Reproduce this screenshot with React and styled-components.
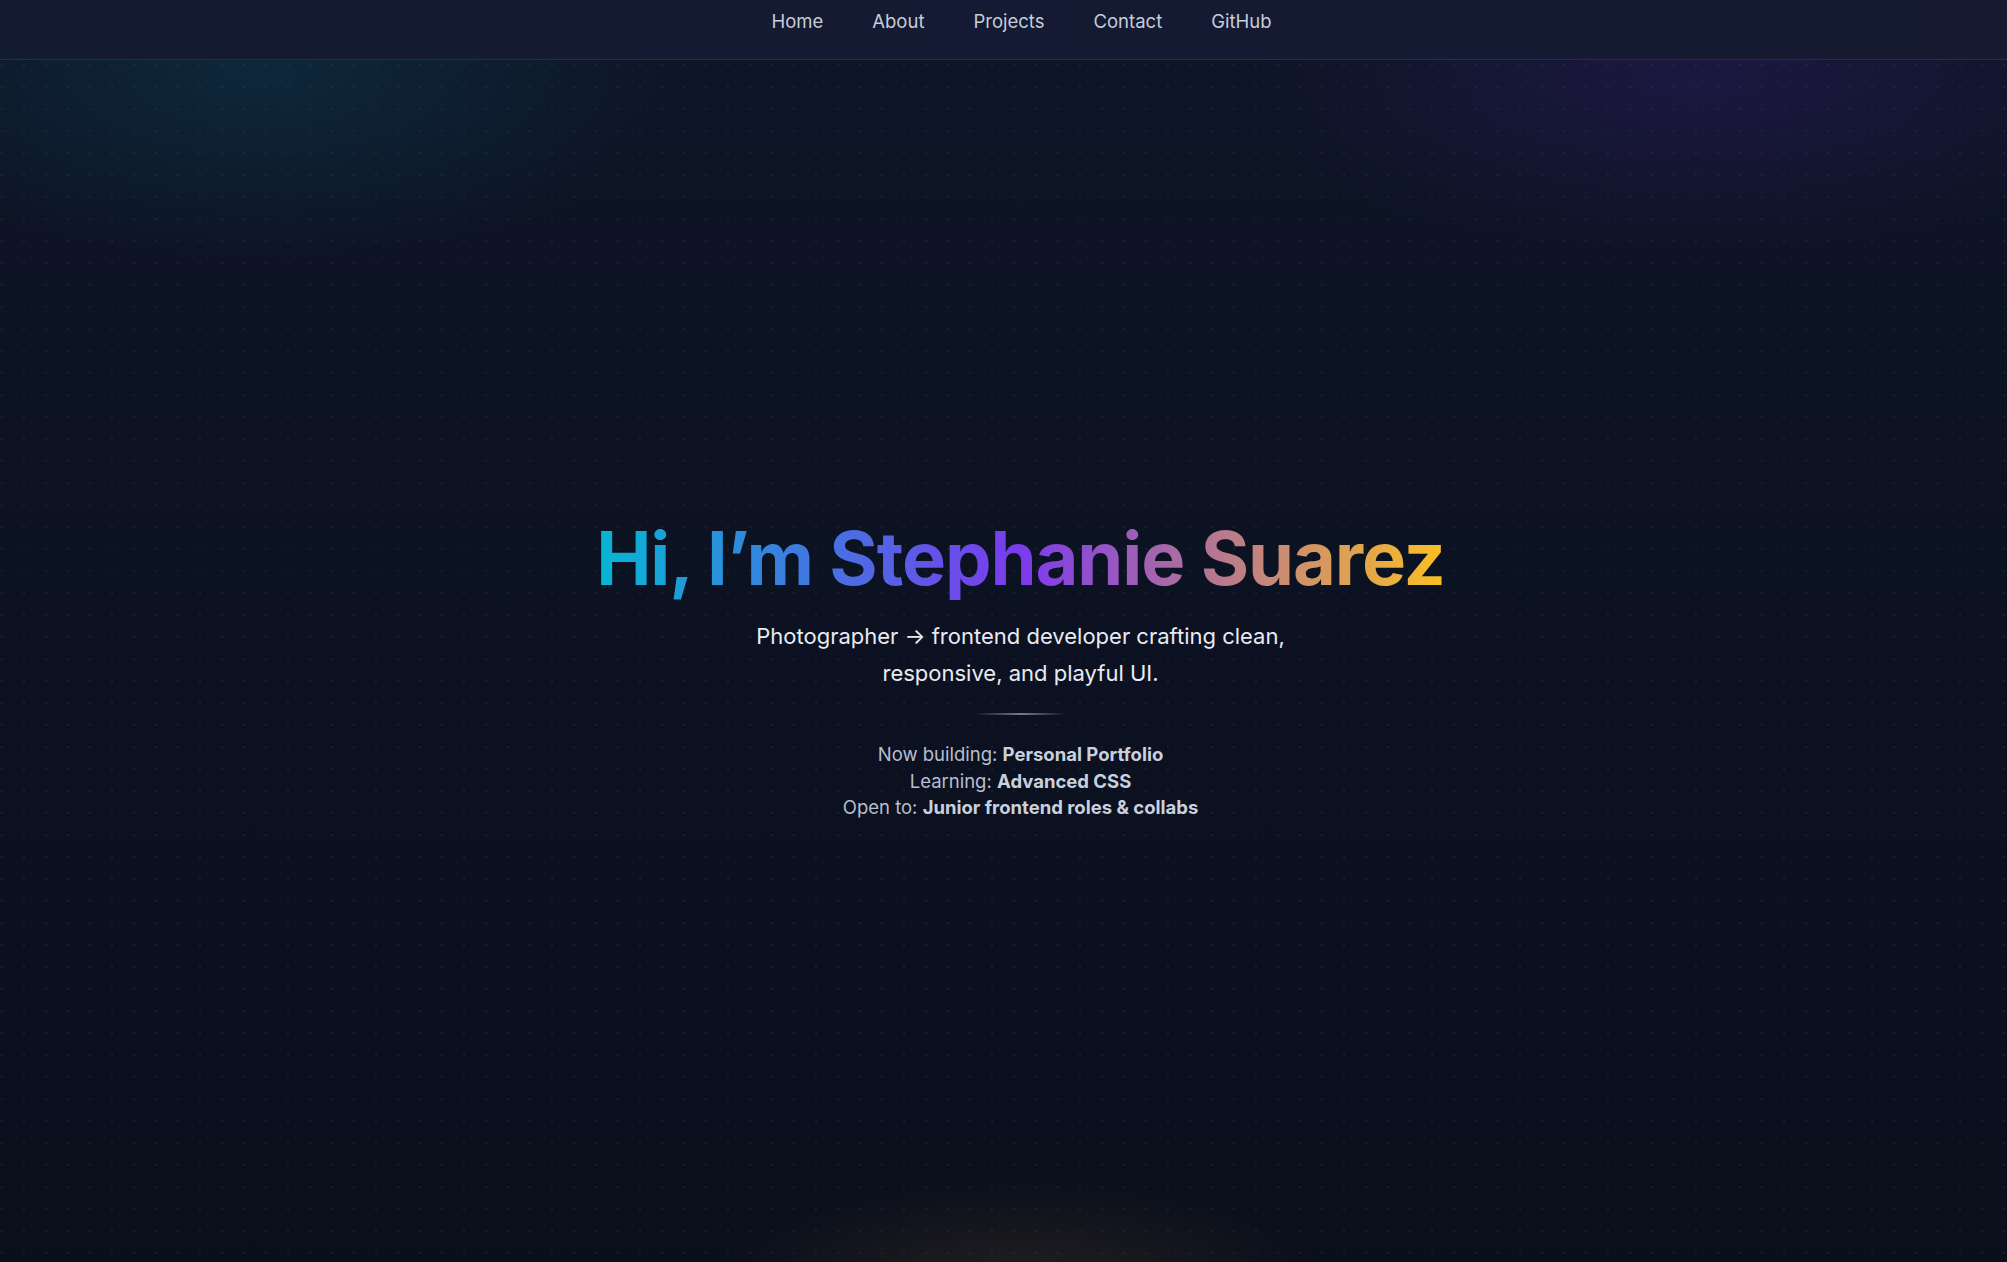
import React from 'react';
import styled, { createGlobalStyle } from 'styled-components';

const GlobalStyle = createGlobalStyle`
  html, body {
    margin: 0;
    padding: 0;
    background: #0b1120;
  }
  body {
    font-family: Inter, "Noto Sans", sans-serif;
    -webkit-font-smoothing: antialiased;
  }
  * { box-sizing: border-box; }
`;

const Page = styled.div`
  position: relative;
  min-height: 100vh;
  display: flex;
  flex-direction: column;
  overflow: hidden;
  background:
    radial-gradient(ellipse 600px 270px at 260px 70px, rgba(14, 116, 144, 0.2), transparent 72%),
    radial-gradient(ellipse 640px 250px at 1700px 80px, rgba(109, 40, 217, 0.15), transparent 72%),
    radial-gradient(ellipse 420px 150px at 1020px 1290px, rgba(190, 130, 50, 0.14), transparent 75%),
    linear-gradient(180deg, #0e1526 0%, #0b1120 60%, #0a0f1c 100%);

  &::before {
    content: '';
    position: absolute;
    inset: 0;
    pointer-events: none;
    background-image: radial-gradient(rgba(148, 163, 184, 0.085) 1px, transparent 1.5px);
    background-size: 22px 22px;
    background-position: 13px 10px;
  }
`;

const NavBar = styled.nav`
  position: relative;
  z-index: 1;
  height: 60px;
  display: flex;
  justify-content: center;
  align-items: flex-start;
  gap: 49px;
  padding-top: 10px;
  padding-left: 36px;
  background: linear-gradient(90deg, #131b30 0%, #141a33 50%, #151a30 100%);
  border-bottom: 1px solid rgba(148, 163, 184, 0.16);
`;

const NavLink = styled.a`
  color: #c7ccd8;
  font-size: 18.5px;
  line-height: 22px;
  text-decoration: none;
  cursor: pointer;
`;

const Hero = styled.main`
  position: relative;
  z-index: 1;
  flex: 1;
  display: flex;
  flex-direction: column;
  align-items: center;
  justify-content: center;
  text-align: center;
  padding-top: 16px;
  padding-left: 34px;
`;

const Title = styled.h1`
  margin: 0;
  font-size: 74px;
  font-weight: 700;
  letter-spacing: -1.1px;
  line-height: 1.12;
  background: linear-gradient(90deg, #06b6d4 0%, #7c3aed 50%, #fbbf24 100%);
  -webkit-background-clip: text;
  background-clip: text;
  color: transparent;
`;

const Tagline = styled.p`
  margin: 18px 0 0;
  max-width: 560px;
  color: #e8ebf2;
  font-size: 22px;
  line-height: 37px;
`;

const Divider = styled.div`
  width: 92px;
  height: 2px;
  margin: 21px 0 26px;
  background: linear-gradient(90deg, transparent, rgba(203, 213, 225, 0.55), transparent);
`;

const StatusList = styled.ul`
  list-style: none;
  margin: 0;
  padding: 0;
  color: #b7bfce;
  font-size: 18.5px;
  line-height: 26.5px;
`;

const StatusValue = styled.strong`
  color: #c9d0dd;
  font-weight: 700;
`;

const links = ['Home', 'About', 'Projects', 'Contact', 'GitHub'];

const status = [
  ['Now building:', 'Personal Portfolio'],
  ['Learning:', 'Advanced CSS'],
  ['Open to:', 'Junior frontend roles & collabs'],
];

export default function App() {
  return (
    <>
      <GlobalStyle />
      <Page>
        <NavBar>
          {links.map((l) => (
            <NavLink key={l}>{l}</NavLink>
          ))}
        </NavBar>
        <Hero>
          <Title>Hi, I’m Stephanie Suarez</Title>
          <Tagline>
            Photographer → frontend developer crafting clean, responsive, and playful UI.
          </Tagline>
          <Divider />
          <StatusList>
            {status.map(([label, value]) => (
              <li key={label}>
                {label} <StatusValue>{value}</StatusValue>
              </li>
            ))}
          </StatusList>
        </Hero>
      </Page>
    </>
  );
}
